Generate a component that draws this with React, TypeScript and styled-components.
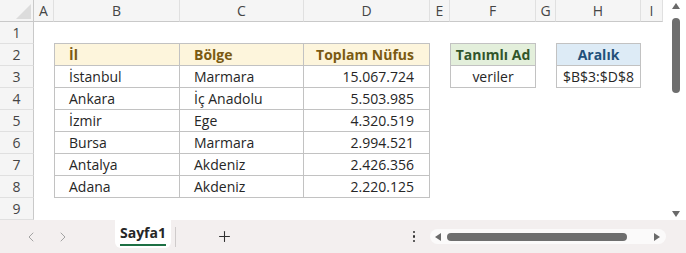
import React from 'react';
import styled, { createGlobalStyle } from 'styled-components';
import { ChevronLeft, ChevronRight, Plus } from 'lucide-react';

const GlobalStyle = createGlobalStyle`
  html, body {
    margin: 0;
    padding: 0;
    background: #f3efef;
    overflow: hidden;
  }
  * { box-sizing: border-box; }
`;

const COLS = ['A', 'B', 'C', 'D', 'E', 'F', 'G', 'H', 'I'];
const COL_WIDTHS = [34, 20, 126, 124, 126, 20, 86, 20, 85, 22];

type Tone = 'gold' | 'green' | 'blue';
type Align = 'left' | 'center' | 'right';

interface CellDef {
  text: string;
  align: Align;
  head?: Tone;
  top?: boolean;
  left?: boolean;
}

const tones: Record<Tone, { bg: string; fg: string }> = {
  gold: { bg: '#fdf5dc', fg: '#7a5a12' },
  green: { bg: '#e3efdb', fg: '#31552a' },
  blue: { bg: '#ddebf6', fg: '#23507a' },
};

const cities = [
  ['İstanbul', 'Marmara', '15.067.724'],
  ['Ankara', 'İç Anadolu', '5.503.985'],
  ['İzmir', 'Ege', '4.320.519'],
  ['Bursa', 'Marmara', '2.994.521'],
  ['Antalya', 'Akdeniz', '2.426.356'],
  ['Adana', 'Akdeniz', '2.220.125'],
];

// sheet content keyed by "row:colIndex" (colIndex 1 = A)
const cells: Record<string, CellDef> = {
  '2:2': { text: 'İl', align: 'left', head: 'gold', top: true, left: true },
  '2:3': { text: 'Bölge', align: 'left', head: 'gold', top: true },
  '2:4': { text: 'Toplam Nüfus', align: 'right', head: 'gold', top: true },
  '2:6': { text: 'Tanımlı Ad', align: 'center', head: 'green', top: true, left: true },
  '3:6': { text: 'veriler', align: 'center', left: true },
  '2:8': { text: 'Aralık', align: 'center', head: 'blue', top: true, left: true },
  '3:8': { text: '$B$3:$D$8', align: 'center', left: true },
};
cities.forEach((c, i) => {
  const r = i + 3;
  cells[`${r}:2`] = { text: c[0], align: 'left', left: true };
  cells[`${r}:3`] = { text: c[1], align: 'left' };
  cells[`${r}:4`] = { text: c[2], align: 'right' };
});

const Window = styled.div`
  width: 686px;
  height: 253px;
  display: flex;
  flex-direction: column;
  font-family: 'Open Sans', 'Noto Sans', sans-serif;
  background: #f3efef;
`;

const SheetArea = styled.div`
  display: flex;
  height: 220px;
  background: #fff;
`;

const Grid = styled.div`
  display: grid;
  grid-template-columns: ${COL_WIDTHS.map((w) => `${w}px`).join(' ')};
  grid-template-rows: 22px repeat(9, 22px);
  background: #fff;
`;

const Corner = styled.div`
  position: relative;
  background: #f5f5f5;
  border-right: 1px solid #c9c9c9;
  border-bottom: 1px solid #c9c9c9;
  &::after {
    content: '';
    position: absolute;
    right: 2px;
    bottom: 2px;
    width: 15px;
    height: 15px;
    background: #dcdcdc;
    clip-path: polygon(100% 0, 100% 100%, 0 100%);
  }
`;

const ColHead = styled.div`
  display: flex;
  align-items: center;
  justify-content: center;
  background: #f5f5f5;
  color: #454545;
  font-size: 14px;
  border-right: 1px solid #e0e0e0;
  border-bottom: 1px solid #c9c9c9;
`;

const RowHead = styled.div`
  display: flex;
  align-items: center;
  justify-content: center;
  background: #f5f5f5;
  color: #454545;
  font-size: 14px;
  border-right: 1px solid #c9c9c9;
  border-bottom: 1px solid #e0e0e0;
`;

const Cell = styled.div<{ $align: Align; $tone?: Tone; $top?: boolean; $left?: boolean; $boxed: boolean }>`
  display: flex;
  align-items: center;
  justify-content: ${(p) => (p.$align === 'left' ? 'flex-start' : p.$align === 'right' ? 'flex-end' : 'center')};
  padding: ${(p) => (p.$align === 'center' ? '0' : p.$align === 'left' ? '0 0 0 14px' : '0 15px 0 0')};
  font-size: 14px;
  white-space: nowrap;
  color: ${(p) => (p.$tone ? tones[p.$tone].fg : '#262626')};
  font-weight: ${(p) => (p.$tone ? 700 : 400)};
  background: ${(p) => (p.$tone ? tones[p.$tone].bg : 'transparent')};
  border-right: ${(p) => (p.$boxed ? '1px solid #c2c2c2' : 'none')};
  border-bottom: ${(p) => (p.$boxed ? '1px solid #c2c2c2' : 'none')};
  border-left: ${(p) => (p.$left ? '1px solid #c2c2c2' : 'none')};
  box-shadow: ${(p) => (p.$top ? '0 -1px 0 #c2c2c2' : 'none')};
`;

const VScroll = styled.div`
  flex: 1;
  margin-left: 2px;
  display: flex;
  flex-direction: column;
  align-items: center;
  padding: 3px 0 3px 0;
  background: #fff;
`;

const VThumb = styled.div`
  width: 8px;
  height: 75px;
  margin-top: 9px;
  border-radius: 4px;
  background: #6e6e6e;
`;

const Spacer = styled.div`
  flex: 1;
`;

const TabBar = styled.div`
  flex: 1;
  display: flex;
  align-items: center;
  padding-left: 15px;
`;

const NavBtn = styled.div`
  width: 32px;
  height: 24px;
  display: flex;
  align-items: center;
  justify-content: center;
  color: #a3a3a3;
`;

const SheetTab = styled.div`
  align-self: flex-start;
  margin-left: 36px;
  width: 56px;
  height: 28px;
  background: #fff;
  border-radius: 0 0 6px 6px;
  display: flex;
  justify-content: center;
  padding-top: 4px;
`;

const TabLabel = styled.span`
  font-size: 14px;
  font-weight: 700;
  color: #262626;
  line-height: 18px;
  height: 22px;
  border-bottom: 2.5px solid #1d7044;
`;

const TabDivider = styled.div`
  width: 1px;
  height: 20px;
  margin-left: 4px;
  background: #cfcbcb;
`;

const AddBtn = styled.div`
  margin-left: 32px;
  width: 32px;
  display: flex;
  justify-content: center;
  color: #303030;
`;

const Dots = styled.div`
  width: 16px;
  display: flex;
  flex-direction: column;
  align-items: center;
  gap: 2px;
  margin-right: 8px;
  span {
    width: 2.5px;
    height: 2.5px;
    border-radius: 50%;
    background: #303030;
  }
`;

const HScroll = styled.div`
  width: 236px;
  height: 15px;
  margin-right: 20px;
  border-radius: 8px;
  background: #fbfafa;
  display: flex;
  align-items: center;
  padding: 0 6px 0 5px;
`;

const HThumb = styled.div`
  width: 180px;
  height: 8px;
  margin-left: 6px;
  border-radius: 4px;
  background: #6e6e6e;
`;

const Tri = ({ dir }: { dir: 'up' | 'down' | 'left' | 'right' }) => {
  const pts = {
    up: '0,6 4,0 8,6',
    down: '0,0 8,0 4,6',
    left: '6,0 6,8 0,4',
    right: '0,0 0,8 6,4',
  }[dir];
  const vert = dir === 'up' || dir === 'down';
  return (
    <svg width={vert ? 8 : 6} height={vert ? 6 : 8} viewBox={vert ? '0 0 8 6' : '0 0 6 8'}>
      <polygon points={pts} fill="#6a6a6a" />
    </svg>
  );
};

const App: React.FC = () => {
  const body: React.ReactNode[] = [];
  for (let r = 1; r <= 9; r++) {
    body.push(<RowHead key={`rh${r}`}>{r}</RowHead>);
    for (let c = 1; c <= 9; c++) {
      const d = cells[`${r}:${c}`];
      body.push(
        <Cell
          key={`${r}:${c}`}
          $align={d ? d.align : 'left'}
          $tone={d?.head}
          $top={d?.top}
          $left={d?.left}
          $boxed={!!d}
        >
          {d?.text}
        </Cell>
      );
    }
  }

  return (
    <Window>
      <GlobalStyle />
      <SheetArea>
        <Grid>
          <Corner />
          {COLS.map((c) => (
            <ColHead key={c}>{c}</ColHead>
          ))}
          {body}
        </Grid>
        <VScroll>
          <Tri dir="up" />
          <VThumb />
          <Spacer />
          <Tri dir="down" />
        </VScroll>
      </SheetArea>
      <TabBar>
        <NavBtn>
          <ChevronLeft size={16} strokeWidth={1.5} />
        </NavBtn>
        <NavBtn>
          <ChevronRight size={16} strokeWidth={1.5} />
        </NavBtn>
        <SheetTab>
          <TabLabel>Sayfa1</TabLabel>
        </SheetTab>
        <TabDivider />
        <AddBtn>
          <Plus size={17} strokeWidth={1.5} />
        </AddBtn>
        <Spacer />
        <Dots>
          <span />
          <span />
          <span />
        </Dots>
        <HScroll>
          <Tri dir="left" />
          <HThumb />
          <Spacer />
          <Tri dir="right" />
        </HScroll>
      </TabBar>
    </Window>
  );
};

export default App;
